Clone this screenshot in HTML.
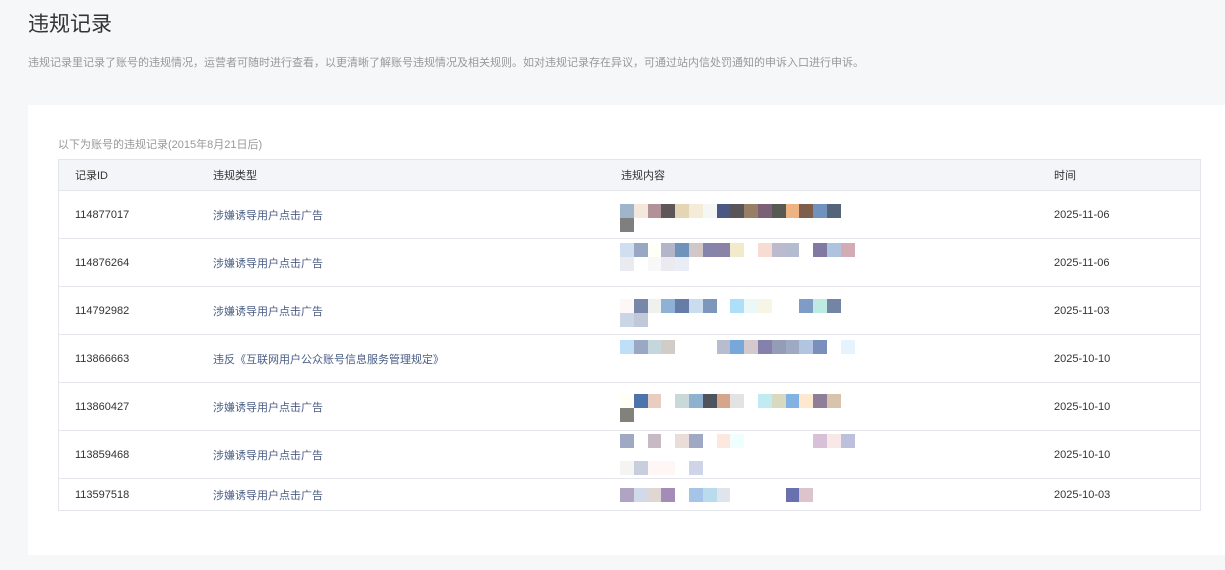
<!DOCTYPE html>
<html><head><meta charset="utf-8"><style>
*{margin:0;padding:0;box-sizing:border-box}
body{width:1225px;height:570px;background:#f6f7f9;font-family:"Liberation Sans","Noto Sans CJK SC",sans-serif;position:relative;overflow:hidden}
h1{position:absolute;left:28px;top:8px;font-size:21px;font-weight:normal;color:#333}
.sub{position:absolute;left:28px;top:54px;font-size:11px;color:#999}
.card{position:absolute;left:28px;top:105px;width:1197px;height:450px;background:#fff}
.cap{position:absolute;left:58px;top:136px;font-size:11px;color:#999}
.tbl{position:absolute;left:58px;top:159px;width:1143px;border:1px solid #e4e6eb}
.hd{height:31px;background:#f4f5f9;border-bottom:1px solid #e4e6eb;position:relative;font-size:11px;color:#333}
.r{height:48px;border-bottom:1px solid #e4e6eb;position:relative;font-size:11px;color:#333}
.r:last-child{height:31px;border-bottom:none}
.c{position:absolute;top:50%;transform:translateY(-50%)}
.a{left:16px}.b{left:154px;color:#4a5d85}.d{left:995px}.hd .b{color:#333}
.px{position:absolute;left:561px;width:235px}
.px div{display:flex;height:14px}
.px span{width:13.8px;height:14px;flex:none}
</style></head><body>
<h1>违规记录</h1>
<div class="sub">违规记录里记录了账号的违规情况，运营者可随时进行查看，以更清晰了解账号违规情况及相关规则。如对违规记录存在异议，可通过站内信处罚通知的申诉入口进行申诉。</div>
<div class="card"></div>
<div class="cap">以下为账号的违规记录(2015年8月21日后)</div>
<div class="tbl">
<div class="hd"><span class="c a">记录ID</span><span class="c b">违规类型</span><span class="c" style="left:562px">违规内容</span><span class="c d">时间</span></div>
<div class="r"><span class="c a">114877017</span><span class="c b">涉嫌诱导用户点击广告</span><span class="c d">2025-11-06</span>
<div class="px" style="top:13px"><div><span style="background:#a0b4cc"></span><span style="background:#f4e8dd"></span><span style="background:#b09298"></span><span style="background:#5e5658"></span><span style="background:#e4d6b4"></span><span style="background:#f4ebd8"></span><span style="background:#f5f7f4"></span><span style="background:#4b5884"></span><span style="background:#585558"></span><span style="background:#977e65"></span><span style="background:#7b6078"></span><span style="background:#575a52"></span><span style="background:#eeb382"></span><span style="background:#7f5e4b"></span><span style="background:#7092bd"></span><span style="background:#546579"></span></div><div><span style="background:#7f7f7f"></span></div></div></div>
<div class="r"><span class="c a">114876264</span><span class="c b">涉嫌诱导用户点击广告</span><span class="c d">2025-11-06</span>
<div class="px" style="top:4px"><div><span style="background:#d0dff0"></span><span style="background:#98a8c3"></span><span style="background:#fefff6"></span><span style="background:#b3b5c8"></span><span style="background:#7093bc"></span><span style="background:#d0c7c6"></span><span style="background:#8784ac"></span><span style="background:#8b83a6"></span><span style="background:#f1ebcc"></span><span></span><span style="background:#f8dbd3"></span><span style="background:#bcbacf"></span><span style="background:#b3bdcf"></span><span></span><span style="background:#8279a3"></span><span style="background:#aec3dd"></span><span style="background:#d3abb5"></span></div><div><span style="background:#eaebf1"></span><span></span><span style="background:#f8f8f8"></span><span style="background:#eaeaf0"></span><span style="background:#eaedf5"></span></div></div></div>
<div class="r"><span class="c a">114792982</span><span class="c b">涉嫌诱导用户点击广告</span><span class="c d">2025-11-03</span>
<div class="px" style="top:12px"><div><span style="background:#fdf7f7"></span><span style="background:#7886aa"></span><span style="background:#eff1ec"></span><span style="background:#90b1d6"></span><span style="background:#667da8"></span><span style="background:#cadcee"></span><span style="background:#7d97bc"></span><span></span><span style="background:#addff8"></span><span style="background:#eaf9f7"></span><span style="background:#f7f5e6"></span><span></span><span></span><span style="background:#7f9cc6"></span><span style="background:#bdebe2"></span><span style="background:#7484a4"></span></div><div><span style="background:#cad6e6"></span><span style="background:#c1c8d8"></span></div></div></div>
<div class="r"><span class="c a">113866663</span><span class="c b">违反《互联网用户公众账号信息服务管理规定》</span><span class="c d">2025-10-10</span>
<div class="px" style="top:5px"><div><span style="background:#bfdff8"></span><span style="background:#9ba8c4"></span><span style="background:#c3d7dc"></span><span style="background:#d2ccc8"></span><span></span><span></span><span></span><span style="background:#b7bccf"></span><span style="background:#78a8da"></span><span style="background:#d4c9cd"></span><span style="background:#8681ac"></span><span style="background:#959cb6"></span><span style="background:#9eaac4"></span><span style="background:#b1c5e0"></span><span style="background:#7b8fbc"></span><span></span><span style="background:#e6f2fc"></span></div></div></div>
<div class="r"><span class="c a">113860427</span><span class="c b">涉嫌诱导用户点击广告</span><span class="c d">2025-10-10</span>
<div class="px" style="top:11px"><div><span style="background:#fffff6"></span><span style="background:#4e74ad"></span><span style="background:#e8cdc0"></span><span></span><span style="background:#c9d9da"></span><span style="background:#90b0d0"></span><span style="background:#4f535e"></span><span style="background:#d6a68c"></span><span style="background:#e3e3e6"></span><span></span><span style="background:#c0ebf2"></span><span style="background:#d9d9c0"></span><span style="background:#81b2e2"></span><span style="background:#ffe8d0"></span><span style="background:#8f7e98"></span><span style="background:#d8c4ac"></span></div><div><span style="background:#82817c"></span></div></div></div>
<div class="r"><span class="c a">113859468</span><span class="c b">涉嫌诱导用户点击广告</span><span class="c d">2025-10-10</span>
<div class="px" style="top:3px"><div><span style="background:#a0a9c4"></span><span></span><span style="background:#c8bac4"></span><span></span><span style="background:#eadcd8"></span><span style="background:#a0a9c4"></span><span></span><span style="background:#fde8e0"></span><span style="background:#effffe"></span><span></span><span></span><span></span><span></span><span></span><span style="background:#d8c0d8"></span><span style="background:#f8e8e8"></span><span style="background:#bcc0dc"></span></div><div style="height:13px"></div><div><span style="background:#f4f5f2"></span><span style="background:#c8cedc"></span><span style="background:#fff7f6"></span><span style="background:#fff6f6"></span><span></span><span style="background:#d0d4e8"></span></div></div></div>
<div class="r"><span class="c a">113597518</span><span class="c b">涉嫌诱导用户点击广告</span><span class="c d">2025-10-03</span>
<div class="px" style="top:9px"><div><span style="background:#b0a4c4"></span><span style="background:#d0dae8"></span><span style="background:#e0d6d2"></span><span style="background:#a48cb8"></span><span></span><span style="background:#a4c4e8"></span><span style="background:#b8dcec"></span><span style="background:#e0e4ec"></span><span></span><span></span><span></span><span></span><span style="background:#6870b0"></span><span style="background:#dcc4cc"></span></div></div></div>
</div>
</body></html>
